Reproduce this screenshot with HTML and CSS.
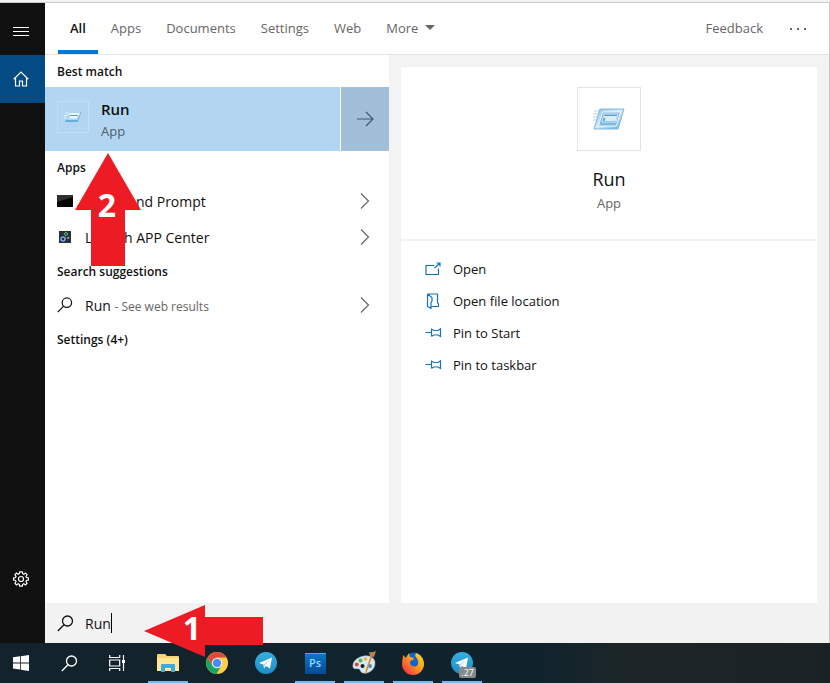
FILE: index.html
```html
<!DOCTYPE html>
<html lang="en">
  <head>
    <meta charset="UTF-8" />
    <meta name="viewport" content="width=device-width, initial-scale=1.0" />
    <title>Search</title>
    <link rel="stylesheet" href="styles.css">
  </head>
  <body>
    <!-- shared icons -->
    <svg class="defs" aria-hidden="true">
      <defs>
        <linearGradient id="blue" x1="0" y1="0" x2="1" y2="1">
          <stop offset="0" stop-color="#8fc0e6" />
          <stop offset="0.5" stop-color="#d4ecfa" />
          <stop offset="1" stop-color="#5ea6dc" />
        </linearGradient>
        <linearGradient id="tele" x1="0" y1="0" x2="0" y2="1">
          <stop offset="0" stop-color="#37aee2" />
          <stop offset="1" stop-color="#1e8dc4" />
        </linearGradient>
        <linearGradient id="fox" x1="1" y1="0" x2="0" y2="1">
          <stop offset="0" stop-color="#ffe226" />
          <stop offset="0.45" stop-color="#ff9a1f" />
          <stop offset="1" stop-color="#f5194f" />
        </linearGradient>
        <symbol id="run" viewBox="0 0 32 32">
          <path d="M1 8h7M0 11h6M0 14h5M0 17h4" stroke="#b5d5ee" />
          <path d="M7 6h24l-6 20H1z" fill="url(#blue)" stroke="#82b7df" />
          <path d="M9.500 9h18l-4 14h-18z" fill="#7db8e2" stroke="#f2faff" />
          <path d="M11 11h14l-2 8H9z" fill="#5c9dcc" stroke="#d9eefa" />
          <path d="M13 13h11l-1.500 5H11.500z" fill="#d9edf9" />
          <circle cx="12" cy="14" r="1" fill="#eef8ff" />
        </symbol>
        <symbol id="run-small" viewBox="0 0 18 16">
          <path d="M1 4h5M0 6.500h5M0 9h4" stroke="#e6f4fd" />
          <path d="M4.500 3H17l-3.500 10H1z" fill="#a9d6f5" />
          <path d="M5 4h11l-1 2.500H4z" fill="#e9f6fd" />
          <path d="M6 7h7.500l-.8 2.500H5z" fill="#f4fbff" />
          <path d="M5.500 6.500h8" stroke="#5e9fca" />
          <path d="M1 13h12.500l.8-2H1.800z" fill="#66aee0" />
          <path d="M17 3l-3.500 10" stroke="#7db6de" />
        </symbol>
        <symbol id="search" viewBox="0 0 17 17">
          <circle cx="10.500" cy="6" r="5" fill="none" stroke="currentColor" stroke-width="1.300" />
          <path d="M7 9.700L.8 16" fill="none" stroke="currentColor" stroke-width="1.300" />
        </symbol>
        <symbol id="chevron" viewBox="0 0 10 16">
          <path d="M1 .5L8.500 8 1 15.500" fill="none" stroke="#666" stroke-width="1.200" />
        </symbol>
        <symbol id="pin" viewBox="0 0 17 12">
          <path d="M.5 5.500h6M6.500 1.500v8M6.500 2.200l2.500 1.300h4L15.500 1.800v7.600L13 8H9L6.500 9.200" fill="none" stroke="#0f74c8" stroke-width="1.200" />
        </symbol>
        <symbol id="telegram" viewBox="0 0 22 22">
          <circle cx="11" cy="11" r="11" fill="url(#tele)" />
          <path d="M4 11L17 5.500 15 16.500l-4-2.500-2 2.500-.5-4z" fill="#fff" />
          <path d="M8.500 12.500L15 7.500 10 13.200 9 16.500z" fill="#b9d8ea" />
        </symbol>
      </defs>
    </svg>

    <div class="screen">
      <main class="search-window">
        <nav class="sidebar">
          <button class="side-btn menu-btn" aria-label="Menu">
            <svg width="16" height="10" viewBox="0 0 16 10"><path d="M0 .5h16M0 4.500h16M0 8.500h16" stroke="#fff" /></svg>
          </button>
          <button class="side-btn home" aria-label="Home">
            <svg width="16" height="16" viewBox="0 0 16 16"><path d="M.7 8.200L8 1l7.300 7.200M2.500 6.500v8.500h4v-5h3v5h4V6.500" fill="none" stroke="#fff" stroke-width="1.200" /></svg>
          </button>
          <button class="side-btn settings-btn" aria-label="Settings">
            <svg width="16" height="16" viewBox="0 0 16 16" fill="none" stroke="#fff" stroke-width="1.200">
              <circle cx="8" cy="8" r="2.500" />
              <path d="M6.700.8h2.600l.4 1.900 1.100.5 1.700-1.100 1.500 1.600-1 1.700.4 1.100 2 .4v2.200l-2 .4-.4 1.100 1 1.700-1.500 1.600-1.700-1.100-1.100.5-.4 1.900H6.700l-.4-1.900-1.100-.5-1.700 1.100L2 12.300l1-1.700-.4-1.100-2-.4V6.900l2-.4L3 5.400 2 3.700l1.500-1.600 1.700 1.100 1.100-.5z" />
            </svg>
          </button>
        </nav>

        <div class="content">
          <header class="tabs">
            <a href="#" class="tab active">All</a>
            <a href="#" class="tab">Apps</a>
            <a href="#" class="tab">Documents</a>
            <a href="#" class="tab">Settings</a>
            <a href="#" class="tab">Web</a>
            <a href="#" class="tab more">More <span class="caret-down"></span></a>
            <a href="#" class="feedback">Feedback</a>
            <button class="dots" aria-label="Options"><span></span><span></span><span></span></button>
          </header>

          <div class="columns">
            <section class="results">
              <h2>Best match</h2>
              <div class="best">
                <a href="#" class="best-main">
                  <span class="best-icon"><svg width="18" height="16"><use href="#run-small" /></svg></span>
                  <span class="best-text">
                    <span class="best-name">Run</span>
                    <span class="kind">App</span>
                  </span>
                </a>
                <button class="best-arrow" aria-label="Show details">
                  <svg width="17" height="16" viewBox="0 0 17 16"><path d="M0 8h16M9 1l7 7-7 7" fill="none" stroke="#41596c" stroke-width="1.200" /></svg>
                </button>
              </div>

              <div class="apps">
                <h2>Apps</h2>
                <a href="#" class="row">
                  <svg class="row-icon" viewBox="0 0 16 16"><path d="M0 2h16v12H0z" fill="#050505" /><path d="M0 2h16v2L0 9z" fill="#303030" /></svg>
                  <span class="label">Command Prompt</span>
                  <svg width="10" height="16"><use href="#chevron" /></svg>
                </a>
                <a href="#" class="row">
                  <svg class="row-icon" viewBox="0 0 16 16">
                    <path d="M2 2h12v12H2z" fill="#24303b" />
                    <circle cx="6" cy="10" r="2" fill="none" stroke="#79a9e8" stroke-width="1.500" />
                    <circle cx="9" cy="5" r="1.500" fill="none" stroke="#67b96b" />
                    <path d="M9.500 9l3-1.500-1 2.500z" fill="#d2cb5a" />
                  </svg>
                  <span class="label">Launch APP Center</span>
                  <svg width="10" height="16"><use href="#chevron" /></svg>
                </a>
                <svg class="step step-two" width="66" height="113" viewBox="0 0 66 113">
                  <path d="M33 0l33 57H50v56H16V57H0z" fill="#ed1c24" />
                  <text x="32" y="64" text-anchor="middle">2</text>
                </svg>
              </div>

              <h2>Search suggestions</h2>
              <a href="#" class="row">
                <svg class="row-icon"><use href="#search" /></svg>
                <span class="label">Run <small>- See web results</small></span>
                <svg width="10" height="16"><use href="#chevron" /></svg>
              </a>
              <h2>Settings (4+)</h2>
            </section>

            <section class="preview">
              <div class="card">
                <div class="card-head">
                  <div class="card-icon"><svg width="32" height="32"><use href="#run" /></svg></div>
                  <h1>Run</h1>
                  <p class="kind">App</p>
                </div>
                <div class="actions">
                  <a href="#">
                    <svg width="17" height="16" viewBox="0 0 17 16"><path d="M9.500 4.500H1v9h12.500V7.500M9.500 7L15 2M11.500 2H15v3.500" fill="none" stroke="#0f74c8" stroke-width="1.200" /></svg>
                    Open
                  </a>
                  <a href="#">
                    <svg width="17" height="16" viewBox="0 0 17 16"><path d="M2.500 1h10v8.500l1 1.500v2.500H6M2.500 1v12.500L6 15.500V9.500L7 8V4.500L2.500 1" fill="none" stroke="#0f74c8" stroke-width="1.200" /></svg>
                    Open file location
                  </a>
                  <a href="#"><svg width="17" height="12"><use href="#pin" /></svg>Pin to Start</a>
                  <a href="#"><svg width="17" height="12"><use href="#pin" /></svg>Pin to taskbar</a>
                </div>
              </div>
            </section>
          </div>

          <div class="search-bar">
            <svg width="17" height="17"><use href="#search" /></svg>
            <input type="text" value="Run" aria-label="Search" />
            <svg class="step step-one" width="119" height="52" viewBox="0 0 119 52">
              <path d="M0 26L61 0v12h58v28H61v12z" fill="#ed1c24" />
              <text x="48" y="35" text-anchor="middle">1</text>
            </svg>
          </div>
        </div>
      </main>

      <footer class="taskbar">
        <button class="task start" aria-label="Start">
          <svg width="16" height="16" viewBox="0 0 16 16"><path d="M0 2.300l7-1v6.200H0zM7.800 1.200L16 0v7.500H7.800zM0 8.400h7v6.200l-7-1zM7.800 8.400H16V16l-8.200-1.200z" fill="#fff" /></svg>
        </button>
        <button class="task" aria-label="Search"><svg width="17" height="17"><use href="#search" /></svg></button>
        <button class="task" aria-label="Task view">
          <svg width="17" height="16" viewBox="0 0 17 16"><path d="M.7 0v2.500h10V0M.7 16v-2.500h10V16M.7 5h10v6H.7zM14.500 0v16" fill="none" stroke="#fff" stroke-width="1.200" /><path d="M13 5h3v3h-3z" fill="#fff" /></svg>
        </button>
        <div class="pinned">
          <button class="app open" aria-label="File Explorer">
            <svg width="22" height="20" viewBox="0 0 22 20"><path d="M0 2q0-1 1-1h7l2 2h11q1 0 1 1v14H0z" fill="#f7d470" /><path d="M0 5h22v13H0z" fill="#ffe796" /><path d="M4 19v-7q0-1 1-1h12q1 0 1 1v7h-4v-4H8v4z" fill="#3fa9dc" /></svg>
          </button>
          <button class="app" aria-label="Chrome">
            <svg width="22" height="22" viewBox="0 0 22 22"><circle cx="11" cy="11" r="11" fill="#ffcd42" /><path d="M1.500 5.500A11 11 0 0 1 20.500 5.500H11L6.500 13.500z" fill="#db4a3c" /><path d="M1.500 5.500A11 11 0 0 0 10.500 22L15.500 13.500H6.500z" fill="#1da261" /><circle cx="11" cy="11" r="5.200" fill="#f3f3f3" /><circle cx="11" cy="11" r="4.200" fill="#4b8bf5" /></svg>
          </button>
          <button class="app" aria-label="Telegram"><svg width="22" height="22"><use href="#telegram" /></svg></button>
          <button class="app open" aria-label="Photoshop"><span class="ps">Ps</span></button>
          <button class="app open" aria-label="Paint">
            <svg width="24" height="24" viewBox="0 0 24 24"><path d="M12 5c6-1 11 2 11 7 0 6-5 11-12 10-3-.5-2-3-4-4s-5 1-6-2C0 11 5 6 12 5z" fill="#d9e8f2" stroke="#9fb9cc" stroke-width=".5" /><circle cx="4.800" cy="13.500" r="2" fill="#d94b3b" /><circle cx="8.500" cy="9.500" r="2" fill="#5fae4b" /><circle cx="13.500" cy="8" r="1.700" fill="#e9b23a" /><circle cx="10.500" cy="15" r="2" fill="#13232c" /><circle cx="18" cy="15" r="2" fill="#3c8fd0" /><path d="M20.500 5L14 23h-1l1-5 5-14z" fill="#e08a2e" /><path d="M17 1q3 1 7-1l-2 6-4-1z" fill="#b98453" /></svg>
          </button>
          <button class="app open" aria-label="Firefox">
            <svg width="24" height="24" viewBox="0 0 24 24"><circle cx="13" cy="11" r="9.500" fill="#1264c8" /><path d="M2 4l3 3 3-5 1 4 4 1-1 2c-2 0-3 1-3 3 0 4 7 5 8 1 1-3-1-6-3-8l1-3c5 2 8 6 8 11A11 11 0 0 1 1 13C1 9 2 7 2 4z" fill="url(#fox)" /></svg>
          </button>
          <button class="app open" aria-label="Telegram, 27 unread"><svg width="22" height="22"><use href="#telegram" /></svg><span class="badge">.27</span></button>
        </div>
      </footer>
    </div>
  </body>
</html>
```
FILE: styles.css
```css
* {
  box-sizing: border-box;
}

body {
  margin: 0;
  background-color: #f3f3f3;
  font-family: "Open Sans", "Noto Sans", sans-serif;
  font-size: 13px;
  color: #111;
}

h1,
h2,
p {
  margin: 0;
}

a {
  color: inherit;
  text-decoration: none;
}

button {
  display: flex;
  align-items: center;
  justify-content: center;
  padding: 0;
  border: none;
  background: transparent;
  font: inherit;
  color: inherit;
}

svg {
  display: block;
  flex: none;
}

.defs {
  position: absolute;
  width: 0;
  height: 0;
}

.screen {
  display: flex;
  flex-direction: column;
  min-height: 100vh;
  padding-top: 2px;
}

.search-window {
  flex: 1;
  display: flex;
  border-top: 1px solid #cacaca;
  border-right: 1px solid #cacaca;
}

/* left rail */
.sidebar {
  display: flex;
  flex-direction: column;
  width: 45px;
  background-color: #101010;
}

.side-btn {
  width: 100%;
  height: 48px;
  padding-right: 3px;
}

.menu-btn {
  height: 52px;
  padding-top: 6px;
}

.home {
  background-color: #044a83;
}

.settings-btn {
  margin-top: auto;
  margin-bottom: 40px;
}

.content {
  flex: 1;
  display: flex;
  flex-direction: column;
  min-width: 0;
}

/* top tabs */
.tabs {
  display: flex;
  align-items: center;
  gap: 1px;
  height: 52px;
  padding: 0 23px 0 13px;
  background-color: #fff;
  border-bottom: 1px solid #e2e2e2;
  color: #666;
}

.tab,
.feedback {
  display: flex;
  align-items: center;
  height: 51px;
  padding: 0 12px 2px;
}

.tab.active {
  padding-top: 2px;
  padding-bottom: 0;
  border-bottom: 4px solid #0078d7;
  font-weight: 600;
  color: #111;
}

.caret-down {
  margin-left: 7px;
  border: 5px solid transparent;
  border-top-color: #666;
  border-bottom: none;
}

.feedback {
  margin-left: auto;
}

.dots {
  gap: 5px;
  margin-left: 14px;
}

.dots span {
  width: 2px;
  height: 2px;
  background-color: #666;
}

.columns {
  flex: 1;
  display: flex;
}

/* results */
.results {
  width: 344px;
  background-color: #fff;
}

h2 {
  padding: 2px 0 0 12px;
  font-size: 12px;
  font-weight: 600;
  line-height: 30px;
}

.best {
  display: flex;
  gap: 1px;
  height: 64px;
}

.best-main {
  flex: 1;
  display: flex;
  gap: 12px;
  padding: 12px;
  background-color: #b2d6f1;
}

.best-icon {
  display: flex;
  align-items: center;
  justify-content: center;
  width: 32px;
  height: 32px;
  margin-top: 2px;
  border: 1px solid #bfdff5;
}

.best-text {
  display: flex;
  flex-direction: column;
}

.best-name {
  font-size: 15px;
  font-weight: 600;
  line-height: 20px;
}

.kind {
  font-size: 13px;
  line-height: 24px;
  color: #666;
}

.best .kind {
  color: #4b5d6b;
}

.best-arrow {
  width: 48px;
  background-color: #a1bfd9;
}

.apps {
  position: relative;
}

.row {
  display: flex;
  align-items: center;
  height: 36px;
  padding: 0 19px 0 12px;
}

.row-icon {
  width: 16px;
  height: 16px;
  margin-right: 12px;
}

.label {
  flex: 1;
  font-size: 14px;
}

.label small {
  font-size: 12px;
  color: #666;
}

/* preview */
.preview {
  flex: 1;
  display: flex;
  padding: 12px 12px 0;
}

.card {
  flex: 1;
  background-color: #fff;
}

.card-head {
  display: flex;
  flex-direction: column;
  align-items: center;
  height: 174px;
  padding-top: 20px;
  border-bottom: 2px solid #f3f3f3;
}

.card-icon {
  display: flex;
  align-items: center;
  justify-content: center;
  width: 64px;
  height: 64px;
  border: 1px solid #e2e2e2;
}

h1 {
  margin-top: 16px;
  font-size: 18px;
  font-weight: 400;
  line-height: 24px;
}

.actions {
  padding: 12px 24px;
}

.actions a {
  display: flex;
  align-items: center;
  gap: 11px;
  height: 32px;
}

/* search box */
.search-bar {
  position: relative;
  display: flex;
  align-items: center;
  gap: 11px;
  height: 40px;
  padding-left: 12px;
  background-color: #f2f2f2;
}

.search-bar input {
  field-sizing: content;
  height: 20px;
  padding: 0;
  border: none;
  border-right: 1px solid #000;
  outline: none;
  background: transparent;
  font: inherit;
  font-size: 14px;
  color: #111;
}

/* numbered arrows */
.step {
  position: absolute;
  z-index: 2;
}

.step text {
  font-size: 32px;
  font-weight: 700;
  fill: #fff;
}

.step-one {
  left: 99px;
  top: 2px;
}

.step-two {
  left: 30px;
  top: 2px;
}

/* taskbar */
.taskbar {
  display: flex;
  height: 40px;
  background: linear-gradient(90deg, #13232c, #10232d 65%, #1c2628 75%, #1a2226);
  color: #fff;
}

.task {
  width: 48px;
}

.start {
  width: 45px;
  padding-right: 3px;
}

.pinned {
  display: flex;
  gap: 9px;
  margin-left: 7px;
}

.app {
  position: relative;
  width: 40px;
  border-top: 2px solid transparent;
  border-bottom: 2px solid transparent;
}

.app.open {
  border-bottom-color: #76b9ed;
}

.ps {
  width: 21px;
  height: 21px;
  background: linear-gradient(#0b78c8, #054a93);
  border-top: 1px solid #29b5f0;
  font-size: 11px;
  font-weight: 600;
  line-height: 18px;
  color: #8fdcff;
}

.badge {
  position: absolute;
  right: 6px;
  bottom: 3px;
  padding: 0 2px;
  border-radius: 2px;
  background-color: #85898c;
  font-size: 9px;
  line-height: 11px;
}
```
